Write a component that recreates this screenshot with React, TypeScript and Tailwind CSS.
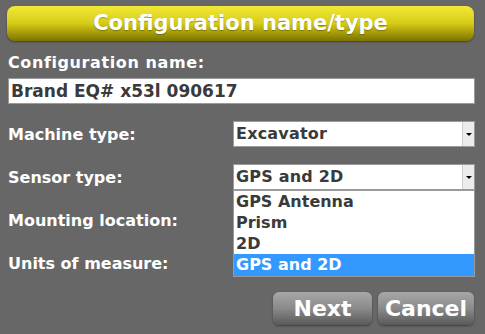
import React from "react";

const font = { fontFamily: '"DejaVu Sans", "Liberation Sans", sans-serif' };

function Select({ value, widthClass }: { value: string; widthClass: string }) {
  return (
    <div className={`relative h-[26px] ${widthClass} bg-white border border-[#9a9a9a] flex items-center`}>
      <span className="pl-[2px] text-[16px] font-semibold text-[#3a3a3a] leading-none tracking-[0.2px]">{value}</span>
      <div className="absolute right-0 top-0 bottom-0 w-[12px] bg-[#ececec] border-l border-[#d0d0d0] flex items-center justify-center">
        <div className="w-0 h-0 border-l-[3px] border-r-[3px] border-t-[3px] border-l-transparent border-r-transparent border-t-black" />
      </div>
    </div>
  );
}

export default function App() {
  return (
    <div className="w-[485px] h-[334px] bg-[#676767] overflow-hidden relative" style={font}>
      <div className="pt-[6px] px-[7px]">
        <div className="h-[35px] w-[467px] rounded-[8px] bg-gradient-to-b from-[#f2ea36] via-[#d6cc16] to-[#7c7300] flex items-center justify-center shadow-[0_1px_2px_rgba(0,0,0,0.4)]">
          <span className="text-white font-bold text-[21px] leading-none [text-shadow:0_1px_1px_rgba(0,0,0,0.3)]">Configuration name/type</span>
        </div>
      </div>
      <div className="pl-[8px] pr-[10px] mt-[12px]">
        <div className="text-white font-semibold text-[16px] leading-[20px] tracking-[0.6px]">Configuration name:</div>
        <div className="mt-[5px] h-[26px] w-[467px] bg-white border border-[#9a9a9a] flex items-center">
          <span className="pl-[2px] text-[17px] font-semibold text-[#3a3a3a] leading-none">Brand EQ# x53l 090617</span>
        </div>
        <div className="mt-[17px] flex flex-col gap-[17px]">
          <div className="flex items-center h-[26px]">
            <span className="w-[225px] pt-[2px] text-white font-semibold text-[16px]">Machine type:</span>
            <Select value="Excavator" widthClass="w-[242px]" />
          </div>
          <div className="flex items-center h-[26px] relative">
            <span className="w-[225px] pt-[2px] text-white font-semibold text-[16px]">Sensor type:</span>
            <Select value="GPS and 2D" widthClass="w-[242px]" />
            <div className="absolute left-[225px] top-[26px] w-[242px] bg-white border border-[#9a9a9a] z-10 text-[16px] font-semibold text-[#3a3a3a] flex flex-col">
              <div className="h-[21px] pl-[2px] flex items-center">GPS Antenna</div>
              <div className="h-[21px] pl-[2px] flex items-center">Prism</div>
              <div className="h-[21px] pl-[2px] flex items-center">2D</div>
              <div className="h-[22px] pl-[2px] flex items-center bg-[#3399ff] text-white">GPS and 2D</div>
            </div>
          </div>
          <div className="flex items-center h-[26px]">
            <span className="w-[225px] pt-[2px] text-white font-semibold text-[16px]">Mounting location:</span>
            <Select value="" widthClass="w-[164px]" />
          </div>
          <div className="flex items-center h-[26px]">
            <span className="w-[225px] pt-[2px] text-white font-semibold text-[16px]">Units of measure:</span>
            <Select value="" widthClass="w-[164px]" />
          </div>
        </div>
        <div className="mt-[16px] flex justify-end gap-[6px] pr-[1px]">
          <button className="w-[99px] h-[33px] rounded-[6px] bg-gradient-to-b from-[#a8a8a8] via-[#8a8a8a] to-[#5a5a5a] text-white font-bold text-[22px] leading-none shadow-[0_1px_2px_rgba(0,0,0,0.4)]">Next</button>
          <button className="w-[96px] h-[33px] rounded-[6px] bg-gradient-to-b from-[#a8a8a8] via-[#8a8a8a] to-[#5a5a5a] text-white font-bold text-[22px] leading-none shadow-[0_1px_2px_rgba(0,0,0,0.4)]">Cancel</button>
        </div>
      </div>
    </div>
  );
}
